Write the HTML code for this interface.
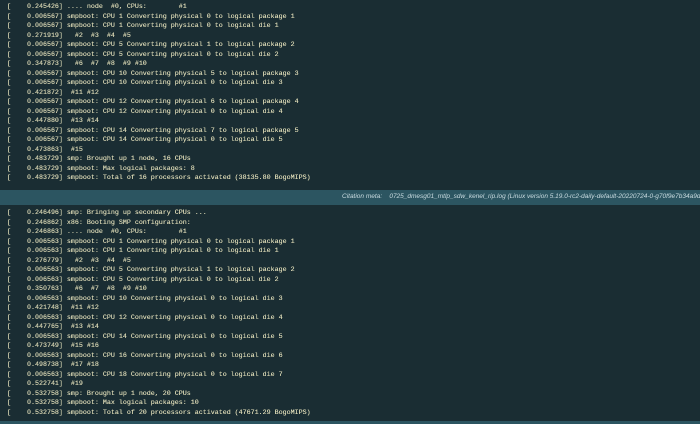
<!DOCTYPE html>
<html><head><meta charset="utf-8"><style>
html,body{margin:0;padding:0;width:700px;height:424px;overflow:hidden;background:#1a2d33;}
.blk{position:absolute;left:0;width:700px;background:#1a2d33;}
pre{margin:0;font-family:"Liberation Mono",monospace;font-size:6.67px;line-height:9.5px;color:#e0ddb8;white-space:pre;position:absolute;left:7px;text-shadow:0 0 0.3px #e0ddb8;}
.bar{position:absolute;left:0;top:190px;width:700px;height:15px;background:#2c5561;}
.bar span{position:absolute;left:342px;top:3px;font-family:"Liberation Sans",sans-serif;font-style:italic;font-size:6.5px;color:#c9dbe0;white-space:nowrap;}
</style></head><body>
<div class="blk" style="top:0;height:190px;"></div>
<pre style="top:3.3px;">[    0.245426] .... node  #0, CPUs:        #1
[    0.006567] smpboot: CPU 1 Converting physical 0 to logical package 1
[    0.006567] smpboot: CPU 1 Converting physical 0 to logical die 1
[    0.271919]   #2  #3  #4  #5
[    0.006567] smpboot: CPU 5 Converting physical 1 to logical package 2
[    0.006567] smpboot: CPU 5 Converting physical 0 to logical die 2
[    0.347873]   #6  #7  #8  #9 #10
[    0.006567] smpboot: CPU 10 Converting physical 5 to logical package 3
[    0.006567] smpboot: CPU 10 Converting physical 0 to logical die 3
[    0.421872]  #11 #12
[    0.006567] smpboot: CPU 12 Converting physical 6 to logical package 4
[    0.006567] smpboot: CPU 12 Converting physical 0 to logical die 4
[    0.447880]  #13 #14
[    0.006567] smpboot: CPU 14 Converting physical 7 to logical package 5
[    0.006567] smpboot: CPU 14 Converting physical 0 to logical die 5
[    0.473863]  #15
[    0.483729] smp: Brought up 1 node, 16 CPUs
[    0.483729] smpboot: Max logical packages: 8
[    0.483729] smpboot: Total of 16 processors activated (38135.80 BogoMIPS)</pre>
<div class="bar"><span>Citation meta:&nbsp;&nbsp;&nbsp; 0725_dmesg01_mtlp_sdw_kenel_rip.log (Linux version 5.19.0-rc2-daily-default-20220724-0-g70f9e7b34a9d)</span></div>
<pre style="top:209.3px;">[    0.246496] smp: Bringing up secondary CPUs ...
[    0.246862] x86: Booting SMP configuration:
[    0.246863] .... node  #0, CPUs:        #1
[    0.006563] smpboot: CPU 1 Converting physical 0 to logical package 1
[    0.006563] smpboot: CPU 1 Converting physical 0 to logical die 1
[    0.276779]   #2  #3  #4  #5
[    0.006563] smpboot: CPU 5 Converting physical 1 to logical package 2
[    0.006563] smpboot: CPU 5 Converting physical 0 to logical die 2
[    0.350763]   #6  #7  #8  #9 #10
[    0.006563] smpboot: CPU 10 Converting physical 0 to logical die 3
[    0.421748]  #11 #12
[    0.006563] smpboot: CPU 12 Converting physical 0 to logical die 4
[    0.447765]  #13 #14
[    0.006563] smpboot: CPU 14 Converting physical 0 to logical die 5
[    0.473749]  #15 #16
[    0.006563] smpboot: CPU 16 Converting physical 0 to logical die 6
[    0.498738]  #17 #18
[    0.006563] smpboot: CPU 18 Converting physical 0 to logical die 7
[    0.522741]  #19
[    0.532758] smp: Brought up 1 node, 20 CPUs
[    0.532758] smpboot: Max logical packages: 10
[    0.532758] smpboot: Total of 20 processors activated (47671.29 BogoMIPS)</pre>
<div style="position:absolute;left:0;top:421px;width:700px;height:3px;background:#2c5561;"></div>
</body></html>
